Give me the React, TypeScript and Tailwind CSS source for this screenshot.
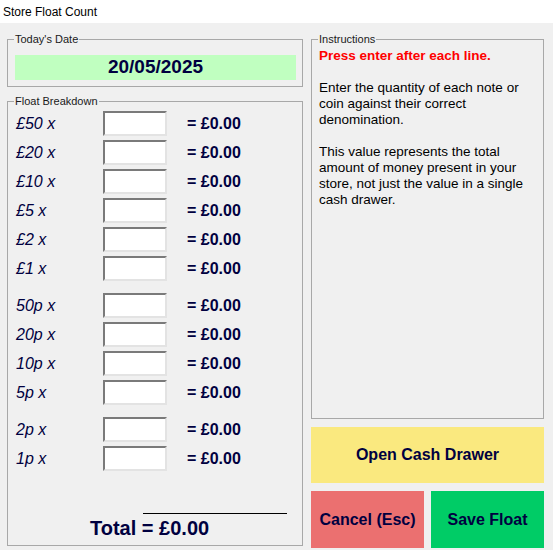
const ink = "text-[#000040]";

const groups = [
  ["£50", "£20", "£10", "£5", "£2", "£1"],
  ["50p", "20p", "10p", "5p"],
  ["2p", "1p"],
];

function Row({ label }: { label: string }) {
  return (
    <div className="flex h-[25px] items-center">
      <span className={`w-[87px] text-[16px] italic ${ink}`}>{label} x</span>
      <div className="h-[25px] w-[64px] border-2 border-t-[#7a7a7a] border-l-[#7a7a7a] border-b-[#e3e3e3] border-r-[#e3e3e3] bg-white" />
      <span className={`ml-[20px] text-[16px] font-bold ${ink}`}>= £0.00</span>
    </div>
  );
}

export default function App() {
  return (
    <div className="flex h-[550px] w-[553px] flex-col overflow-hidden bg-[#f0f0f0] font-['Liberation_Sans',Arial,sans-serif]">
      <div className="flex h-[23px] items-center bg-white pl-[3px] text-[12px] text-black">
        Store Float Count
      </div>

      <div className="flex gap-[8px] pl-[7px] pt-[9px]">
        <div className="flex w-[296px] flex-col">
          <fieldset className="border border-[#a8a8a8] pb-[6px] pl-[7px] pr-[6px] pt-[9px]">
            <legend className="-ml-[1px] px-[1px] text-[11px] leading-[14px] text-[#1a1a1a]">
              Today's Date
            </legend>
            <div className={`flex h-[25px] items-center justify-center bg-[#c0ffc0] text-[19px] font-bold ${ink}`}>
              20/05/2025
            </div>
          </fieldset>

          <fieldset className="mt-[7px] h-[452px] border border-[#a8a8a8] pl-[8px] pt-[3px]">
            <legend className="-ml-[2px] px-[1px] text-[11px] leading-[14px] text-[#1a1a1a]">
              Float Breakdown
            </legend>
            {groups.map((g, gi) => (
              <div key={gi} className={`flex flex-col gap-[4px] ${gi === 1 ? "mt-[12px]" : gi === 2 ? "mt-[12px]" : ""}`}>
                {g.map((d) => (
                  <Row key={d} label={d} />
                ))}
              </div>
            ))}
            <div className="ml-[127px] mt-[42px] h-px w-[144px] bg-black" />
            <div className={`ml-[74px] mt-[2px] text-[20px] font-bold leading-[24px] ${ink}`}>
              Total = £0.00
            </div>
          </fieldset>
        </div>

        <div className="flex w-[233px] flex-col">
          <fieldset className="h-[387px] border border-[#a8a8a8] pl-[7px] pr-[16px] pt-[2px]">
            <legend className="-ml-[1px] px-[1px] text-[11px] leading-[14px] text-[#1a1a1a]">
              Instructions
            </legend>
            <div className="text-[13.5px] leading-[16px] text-black">
              <p className="font-bold text-[#ff0000]">Press enter after each line.</p>
              <p className="mt-[16px]">
                Enter the quantity of each note or coin against their correct denomination.
              </p>
              <p className="mt-[16px]">
                This value represents the total amount of money present in your store, not just the value in a single cash drawer.
              </p>
            </div>
          </fieldset>

          <button className={`mt-[8px] h-[56px] bg-[#fae97f] text-[16px] font-bold ${ink}`}>
            Open Cash Drawer
          </button>
          <div className="mt-[8px] flex gap-[7px]">
            <button className={`h-[57px] w-[113px] bg-[#eb7070] text-[16px] font-bold ${ink}`}>
              Cancel (Esc)
            </button>
            <button className={`h-[57px] w-[113px] bg-[#00cc66] text-[16px] font-bold ${ink}`}>
              Save Float
            </button>
          </div>
        </div>
      </div>
    </div>
  );
}
